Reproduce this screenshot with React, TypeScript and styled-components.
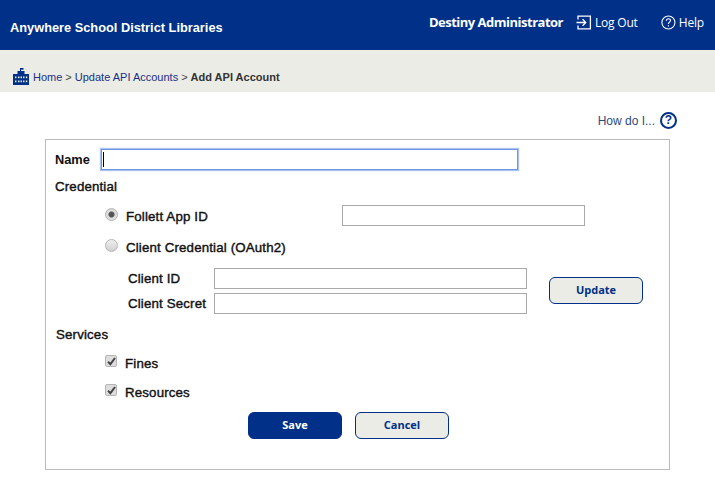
import styled, { createGlobalStyle, css } from "styled-components";

const NAVY = "#003087";

const GlobalStyle = createGlobalStyle`
  html, body {
    margin: 0;
    padding: 0;
    background: #fff;
    font-family: "Liberation Sans", Arial, sans-serif;
    color: #111;
  }
`;

const labelText = css`
  font-size: 13.3px;
  -webkit-text-stroke: 0.4px #111;
  letter-spacing: 0.15px;
`;

const CheckMark = () => (
  <svg width="9" height="9" viewBox="0 0 9 9" fill="none" stroke="#444" strokeWidth="2">
    <path d="M1 4.8l2.4 2.4L8 1" />
  </svg>
);

export default function App() {
  return (
    <>
      <GlobalStyle />
      <Header>
        <DistrictName>Anywhere School District Libraries</DistrictName>
        <UserName>Destiny Administrator</UserName>
        <HeaderLink $width={85}>
          <svg width="16" height="15" viewBox="0 0 16 15" fill="none" stroke="#fff" strokeWidth="1.3">
            <path d="M2 4.5V1.2h12.4v12.6H2v-3.3" />
            <path d="M0.5 7.5h9M6.6 4.3l3.2 3.2-3.2 3.2" />
          </svg>
          Log Out
        </HeaderLink>
        <HeaderLink $width={43}>
          <svg width="15" height="15" viewBox="0 0 15 15" fill="none" stroke="#fff" strokeWidth="1.1">
            <circle cx="7.5" cy="7.5" r="6.6" />
            <path d="M5.4 5.8c0-1.4 1-2.1 2.1-2.1s2.1.8 2.1 1.9c0 1.6-2.1 1.6-2.1 3.3" />
            <path d="M7.5 10.2v1.3" />
          </svg>
          Help
        </HeaderLink>
      </Header>

      <Breadcrumb>
        <svg width="16" height="17" viewBox="0 0 16 17" fill={NAVY}>
          <path d="M7 0h3.500v1.800H8V3h3.500v3H16v11H0V6h4.500V3H7z" />
          <g fill="#ebece6">
            <rect x="2" y="8.500" width="1.5" height="1.7" />
            <rect x="5" y="8.500" width="1.5" height="1.7" />
            <rect x="7.500" y="8.500" width="1.5" height="1.7" />
            <rect x="10" y="8.500" width="1.5" height="1.7" />
            <rect x="12.800" y="8.500" width="1.5" height="1.7" />
            <rect x="2" y="12.500" width="1.5" height="1.7" />
            <rect x="5" y="12.500" width="1.5" height="1.7" />
            <rect x="7.500" y="12.500" width="1.5" height="1.7" />
            <rect x="10" y="12.500" width="1.5" height="1.7" />
            <rect x="12.800" y="12.500" width="1.5" height="1.7" />
          </g>
        </svg>
        <CrumbLink>Home</CrumbLink>
        <CrumbSep>&gt;</CrumbSep>
        <CrumbLink>Update API Accounts</CrumbLink>
        <CrumbSep>&gt;</CrumbSep>
        <CrumbCurrent>Add API Account</CrumbCurrent>
      </Breadcrumb>

      <HelpRow>
        How do I...
        <HelpBadge>?</HelpBadge>
      </HelpRow>

      <Card>
        <NameRow>
          <FieldLabel>Name</FieldLabel>
          <FocusedField>
            <TextField $width={417} $focused />
            <Caret />
          </FocusedField>
        </NameRow>

        <SectionTitle>Credential</SectionTitle>

        <OptionRow>
          <Radio $checked />
          <OptionLabel>Follett App ID</OptionLabel>
          <AppIdField />
        </OptionRow>
        <OptionRow $top={10}>
          <Radio />
          <OptionLabel>Client Credential (OAuth2)</OptionLabel>
        </OptionRow>

        <OauthBlock>
          <OauthFields>
            <OauthLabel>Client ID</OauthLabel>
            <TextField $width={313} />
            <OauthLabel>Client Secret</OauthLabel>
            <TextField $width={313} />
          </OauthFields>
          <Button>Update</Button>
        </OauthBlock>

        <ServicesTitle>Services</ServicesTitle>

        <CheckRow $top={12}>
          <CheckBox>
            <CheckMark />
          </CheckBox>
          <OptionLabel>Fines</OptionLabel>
        </CheckRow>
        <CheckRow $top={15}>
          <CheckBox>
            <CheckMark />
          </CheckBox>
          <OptionLabel>Resources</OptionLabel>
        </CheckRow>

        <Actions>
          <Button $primary>Save</Button>
          <Button>Cancel</Button>
        </Actions>
      </Card>
    </>
  );
}

const Header = styled.header`
  height: 50px;
  box-sizing: border-box;
  background: ${NAVY};
  color: #fff;
  display: flex;
  align-items: center;
  padding: 0 11px 0 10px;
`;

const DistrictName = styled.div`
  font-size: 12.8px;
  font-weight: 700;
  margin-top: 5px;
  flex: 1;
`;

const UserName = styled.div`
  font-size: 13px;
  font-weight: 700;
  margin: -6px 13px 0 0;
  font-family: "Open Sans", sans-serif;
  letter-spacing: -0.5px;
`;

const HeaderLink = styled.div<{ $width: number }>`
  display: flex;
  align-items: center;
  gap: 3px;
  width: ${(p) => p.$width}px;
  margin-top: -6px;
  font-family: "Open Sans", sans-serif;
  font-size: 12px;
  letter-spacing: -0.2px;
`;

const Breadcrumb = styled.nav`
  height: 42px;
  box-sizing: border-box;
  background: #ebece6;
  display: flex;
  align-items: center;
  padding: 11px 0 0 13px;
  font-size: 11px;
  gap: 3px;

  svg {
    margin-right: 1px;
  }
`;

const CrumbLink = styled.span`
  color: #1c2f85;
`;

const CrumbSep = styled.span`
  color: #444;
`;

const CrumbCurrent = styled.span`
  color: #333;
  font-weight: 700;
  font-size: 11px;
`;

const HelpRow = styled.div`
  height: 47px;
  box-sizing: border-box;
  display: flex;
  justify-content: flex-end;
  align-items: center;
  gap: 5px;
  padding: 10px 38px 0 0;
  font-size: 12px;
  color: #2b4a80;
`;

const HelpBadge = styled.span`
  width: 13px;
  height: 13px;
  border: 2px solid ${NAVY};
  border-radius: 50%;
  color: ${NAVY};
  font-size: 12px;
  font-weight: 700;
  line-height: 13px;
  text-align: center;
`;

const Card = styled.main`
  width: 625px;
  height: 331px;
  box-sizing: border-box;
  margin-left: 45px;
  border: 1px solid #bbb;
  padding: 9px 0 0 9px;
  font-size: 12.8px;
`;

const NameRow = styled.div`
  display: flex;
  align-items: center;
`;

const FieldLabel = styled.label`
  width: 46px;
  font-weight: 700;
`;

const FocusedField = styled.div`
  position: relative;
  display: flex;
`;

const Caret = styled.span`
  position: absolute;
  left: 2px;
  top: 3px;
  width: 1px;
  height: 15px;
  background: #000;
`;

const TextField = styled.input<{ $width: number; $focused?: boolean }>`
  width: ${(p) => p.$width}px;
  height: 21px;
  box-sizing: border-box;
  padding: 0 1px;
  background: #fff;
  outline: none;
  border: 1px solid ${(p) => (p.$focused ? "#6d95e0" : "#a9a9a9")};
  box-shadow: ${(p) => (p.$focused ? "0 0 1px 1px #a9c2ef" : "none")};
`;

const SectionTitle = styled.div`
  ${labelText}
  margin-top: 9px;
  line-height: 16px;
`;

const ServicesTitle = styled(SectionTitle)`
  margin: 13px 0 0 1px;
`;

const OptionRow = styled.div<{ $top?: number }>`
  display: flex;
  align-items: center;
  height: 21px;
  margin-top: ${(p) => p.$top ?? 10}px;
  padding-left: 50px;
`;

const Radio = styled.span<{ $checked?: boolean }>`
  width: 13px;
  height: 13px;
  box-sizing: border-box;
  border: 1px solid #b5b5b5;
  border-radius: 50%;
  background: ${(p) =>
    p.$checked
      ? "radial-gradient(circle, #555 0 2.5px, #dcdcdc 3.5px)"
      : "linear-gradient(#f0f0f0, #d0d0d0)"};
  margin: -3px 8px 0 0;
`;

const OptionLabel = styled.span`
  ${labelText}
  padding-top: 2px;
`;

const AppIdField = styled(TextField).attrs({ $width: 243 })`
  margin-left: 134px;
`;

const OauthBlock = styled.div`
  display: flex;
  align-items: flex-start;
  margin-top: 11px;
  padding-left: 73px;
`;

const OauthFields = styled.div`
  display: grid;
  grid-template-columns: 86px 313px;
  row-gap: 4px;
  align-items: center;
  margin-right: 22px;
`;

const OauthLabel = styled.label`
  ${labelText}
`;

const Button = styled.button<{ $primary?: boolean }>`
  width: 94px;
  height: 27px;
  box-sizing: border-box;
  border: 1px solid ${NAVY};
  border-radius: 6px;
  background: ${(p) => (p.$primary ? NAVY : "#ebece6")};
  color: ${(p) => (p.$primary ? "#fff" : NAVY)};
  font-family: "Open Sans", sans-serif;
  font-size: 11px;
  font-weight: 700;
  padding: 0 0 2px;
  margin-top: 9px;
`;

const CheckRow = styled.div<{ $top: number }>`
  display: flex;
  align-items: center;
  height: 14px;
  margin-top: ${(p) => p.$top}px;
  padding-left: 50px;
`;

const CheckBox = styled.span`
  width: 12px;
  height: 12px;
  box-sizing: border-box;
  border: 1px solid #b5b5b5;
  border-radius: 2px;
  background: #ddd;
  display: flex;
  align-items: center;
  justify-content: center;
  margin: -2px 8px 0 0;
`;

const Actions = styled.div`
  display: flex;
  gap: 13px;
  margin: 5px 0 0 193px;
`;
